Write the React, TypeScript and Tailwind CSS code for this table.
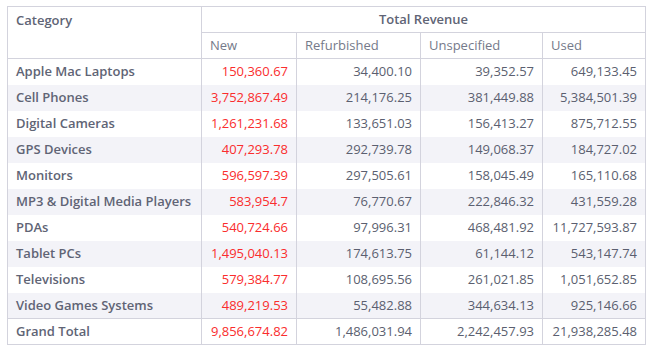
const rows: [string, string, string, string, string][] = [
  ['Apple Mac Laptops', '150,360.67', '34,400.10', '39,352.57', '649,133.45'],
  ['Cell Phones', '3,752,867.49', '214,176.25', '381,449.88', '5,384,501.39'],
  ['Digital Cameras', '1,261,231.68', '133,651.03', '156,413.27', '875,712.55'],
  ['GPS Devices', '407,293.78', '292,739.78', '149,068.37', '184,727.02'],
  ['Monitors', '596,597.39', '297,505.61', '158,045.49', '165,110.68'],
  ['MP3 & Digital Media Players', '583,954.7', '76,770.67', '222,846.32', '431,559.28'],
  ['PDAs', '540,724.66', '97,996.31', '468,481.92', '11,727,593.87'],
  ['Tablet PCs', '1,495,040.13', '174,613.75', '61,144.12', '543,147.74'],
  ['Televisions', '579,384.77', '108,695.56', '261,021.85', '1,051,652.85'],
  ['Video Games Systems', '489,219.53', '55,482.88', '344,634.13', '925,146.66'],
];

const total: [string, string, string, string, string] = [
  'Grand Total',
  '9,856,674.82',
  '1,486,031.94',
  '2,242,457.93',
  '21,938,285.48',
];

function Row({ cells, striped, top }: { cells: string[]; striped?: boolean; top?: boolean }) {
  const rowCls = `${striped ? 'bg-[#f3f3f8]' : 'bg-white'} ${top ? 'border-t border-[#d3d3dd]' : ''}`;
  return (
    <tr className={rowCls}>
      <td className="h-[26px] px-2 py-0 font-semibold text-[#606475] border-r border-[#d3d3dd] whitespace-nowrap">
        {cells[0]}
      </td>
      <td className="px-2 py-0 text-right text-[#fa2d2d] border-r border-[#d3d3dd]">{cells[1]}</td>
      <td className="px-2 py-0 text-right text-[#5b5f70] border-r border-[#d3d3dd]">{cells[2]}</td>
      <td className="px-2 py-0 text-right text-[#5b5f70] border-r border-[#d3d3dd]">{cells[3]}</td>
      <td className="px-2 py-0 text-right text-[#5b5f70]">{cells[4]}</td>
    </tr>
  );
}

export default function App() {
  return (
    <div className="w-[652px] h-[352px] bg-white pt-[6px] pl-[7px]" style={{ fontFamily: '"Open Sans", sans-serif' }}>
      <table className="w-[638px] table-fixed border-collapse border border-[#d3d3dd] text-[13px] leading-none">
        <colgroup>
          <col className="w-[194px]" />
          <col className="w-[95px]" />
          <col className="w-[124px]" />
          <col className="w-[122px]" />
          <col className="w-[103px]" />
        </colgroup>
        <thead>
          <tr>
            <th
              rowSpan={2}
              className="px-2 pt-[7px] align-top text-left font-semibold text-[#606475] border-r border-b border-[#d3d3dd]"
            >
              Category
            </th>
            <th colSpan={4} className="h-[26px] text-center font-semibold text-[#606475] border-b border-[#d3d3dd]">
              Total Revenue
            </th>
          </tr>
          <tr>
            <th className="h-[26px] px-2 text-left font-normal text-[#757a8a] border-r border-b border-[#d3d3dd]">New</th>
            <th className="px-2 text-left font-normal text-[#757a8a] border-r border-b border-[#d3d3dd]">Refurbished</th>
            <th className="px-2 text-left font-normal text-[#757a8a] border-r border-b border-[#d3d3dd]">Unspecified</th>
            <th className="px-2 text-left font-normal text-[#757a8a] border-b border-[#d3d3dd]">Used</th>
          </tr>
        </thead>
        <tbody>
          {rows.map((r, i) => (
            <Row key={r[0]} cells={r} striped={i % 2 === 1} />
          ))}
          <Row cells={total} top />
        </tbody>
      </table>
    </div>
  );
}
